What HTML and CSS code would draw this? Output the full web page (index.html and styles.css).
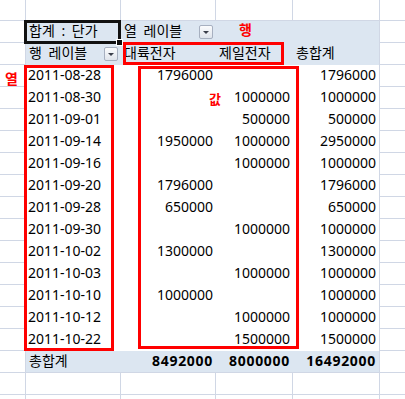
FILE: index.html
```html
<!DOCTYPE html>
<html lang="ko">
<head>
<meta charset="utf-8">
<title>피벗 테이블</title>
<link rel="stylesheet" href="styles.css">
</head>
<body>
<div class="page">
  <div class="sheet">
    <div class="c"></div><div class="c"></div><div class="c"></div><div class="c"></div><div class="c"></div><div class="c"></div>

    <div class="pivot">
      <div class="p hd"><span>합계 : 단가</span></div>
      <div class="p hd"><span>열 레이블</span><span class="dd"></span></div>
      <div class="p hd"></div>
      <div class="p hd"></div>

      <div class="p hd"><span>행 레이블</span><span class="dd"></span></div>
      <div class="p hd">대륙전자</div>
      <div class="p hd">제일전자</div>
      <div class="p hd">총합계</div>

      <div class="p">2011-08-28</div><div class="p num">1796000</div><div class="p num"></div><div class="p num">1796000</div>
      <div class="p">2011-08-30</div><div class="p num"></div><div class="p num">1000000</div><div class="p num">1000000</div>
      <div class="p">2011-09-01</div><div class="p num"></div><div class="p num">500000</div><div class="p num">500000</div>
      <div class="p">2011-09-14</div><div class="p num">1950000</div><div class="p num">1000000</div><div class="p num">2950000</div>
      <div class="p">2011-09-16</div><div class="p num"></div><div class="p num">1000000</div><div class="p num">1000000</div>
      <div class="p">2011-09-20</div><div class="p num">1796000</div><div class="p num"></div><div class="p num">1796000</div>
      <div class="p">2011-09-28</div><div class="p num">650000</div><div class="p num"></div><div class="p num">650000</div>
      <div class="p">2011-09-30</div><div class="p num"></div><div class="p num">1000000</div><div class="p num">1000000</div>
      <div class="p">2011-10-02</div><div class="p num">1300000</div><div class="p num"></div><div class="p num">1300000</div>
      <div class="p">2011-10-03</div><div class="p num"></div><div class="p num">1000000</div><div class="p num">1000000</div>
      <div class="p">2011-10-10</div><div class="p num">1000000</div><div class="p num"></div><div class="p num">1000000</div>
      <div class="p">2011-10-12</div><div class="p num"></div><div class="p num">1000000</div><div class="p num">1000000</div>
      <div class="p">2011-10-22</div><div class="p num"></div><div class="p num">1500000</div><div class="p num">1500000</div>

      <div class="p tot">총합계</div><div class="p tot num b">8492000</div><div class="p tot num b">8000000</div><div class="p tot num b">16492000</div>
    </div>

    <div class="c"></div><div class="c"></div>
    <div class="c"></div><div class="c"></div>
    <div class="c"></div><div class="c"></div>
    <div class="c"></div><div class="c"></div>
    <div class="c"></div><div class="c"></div>
    <div class="c"></div><div class="c"></div>
    <div class="c"></div><div class="c"></div>
    <div class="c"></div><div class="c"></div>
    <div class="c"></div><div class="c"></div>
    <div class="c"></div><div class="c"></div>
    <div class="c"></div><div class="c"></div>
    <div class="c"></div><div class="c"></div>
    <div class="c"></div><div class="c"></div>
    <div class="c"></div><div class="c"></div>
    <div class="c"></div><div class="c"></div>
    <div class="c"></div><div class="c"></div>

    <div class="c"></div><div class="c"></div><div class="c"></div><div class="c"></div><div class="c"></div><div class="c"></div>
    <div class="c"></div><div class="c"></div><div class="c"></div><div class="c"></div><div class="c"></div><div class="c"></div>
  </div>

  <div class="active"></div>
  <div class="handle"></div>
  <div class="mark mark-head"></div>
  <div class="mark mark-rows"></div>
  <div class="mark mark-vals"></div>
  <div class="note note-row">행</div>
  <div class="note note-col">열</div>
  <div class="note note-val">값</div>
</div>
</body>
</html>
```

FILE: styles.css
```css
html, body {
  margin: 0;
  padding: 0;
}

body {
  background: #fff;
  color: #000;
  font-family: "Noto Sans", "Noto Sans CJK KR", sans-serif;
  font-size: 14px;
  word-spacing: 3px;
}

.page {
  position: relative;
  width: 405px;
  height: 399px;
  overflow: hidden;
}

.sheet {
  display: grid;
  grid-template-columns: 25px 94px 94px 76px 86px 40px;
  grid-template-rows: 20px repeat(18, 21px);
  gap: 1px;
  width: 420px;
  background: #d0d7e5;
}

.c {
  background: #fff;
}

.pivot {
  grid-column: 2 / 6;
  grid-row: 2 / 18;
  display: grid;
  grid-template-columns: 95px 95px 77px 86px;
  grid-template-rows: repeat(15, 22px) 21px;
  background: #fff;
}

.p {
  display: flex;
  align-items: flex-start;
  justify-content: space-between;
  padding: 0 3px 0 2px;
  line-height: 20px;
  white-space: nowrap;
  overflow: hidden;
}

.hd {
  background: #dce6f1;
  padding-left: 3px;
}

.tot {
  background: #dce6f1;
  padding-left: 3px;
}

.num {
  justify-content: flex-end;
}

.b {
  font-weight: 700;
  letter-spacing: 0.7px;
}

.dd {
  position: relative;
  align-self: center;
  box-sizing: border-box;
  width: 14px;
  height: 14px;
  border: 1px solid #a7b0c0;
  border-radius: 2px;
  background: linear-gradient(#fbfcfd, #dfe4eb);
}

.dd::after {
  content: "";
  position: absolute;
  left: 3px;
  top: 5px;
  border-left: 3px solid transparent;
  border-right: 3px solid transparent;
  border-top: 3px solid #3a3f4a;
}

.active {
  position: absolute;
  left: 24px;
  top: 20px;
  width: 97px;
  height: 24px;
  box-sizing: border-box;
  border: 3px solid #111;
}

.handle {
  position: absolute;
  left: 116px;
  top: 39px;
  width: 7px;
  height: 7px;
  box-sizing: border-box;
  border: 1px solid #fff;
  background: #111;
}

.mark {
  position: absolute;
  box-sizing: border-box;
  border: 3px solid #ff0000;
}

.mark-head {
  left: 123px;
  top: 42px;
  width: 161px;
  height: 23px;
}

.mark-rows {
  left: 24px;
  top: 65px;
  width: 90px;
  height: 286px;
}

.mark-vals {
  left: 138px;
  top: 66px;
  width: 161px;
  height: 283px;
}

.note {
  position: absolute;
  color: #ff0000;
  font-family: "Noto Sans CJK KR", sans-serif;
  font-weight: 700;
  line-height: 1;
}

.note-row {
  left: 239px;
  top: 22px;
  font-size: 14px;
}

.note-col {
  left: 5px;
  top: 71px;
  font-size: 14px;
}

.note-val {
  left: 209px;
  top: 92px;
  font-size: 13px;
}
```
